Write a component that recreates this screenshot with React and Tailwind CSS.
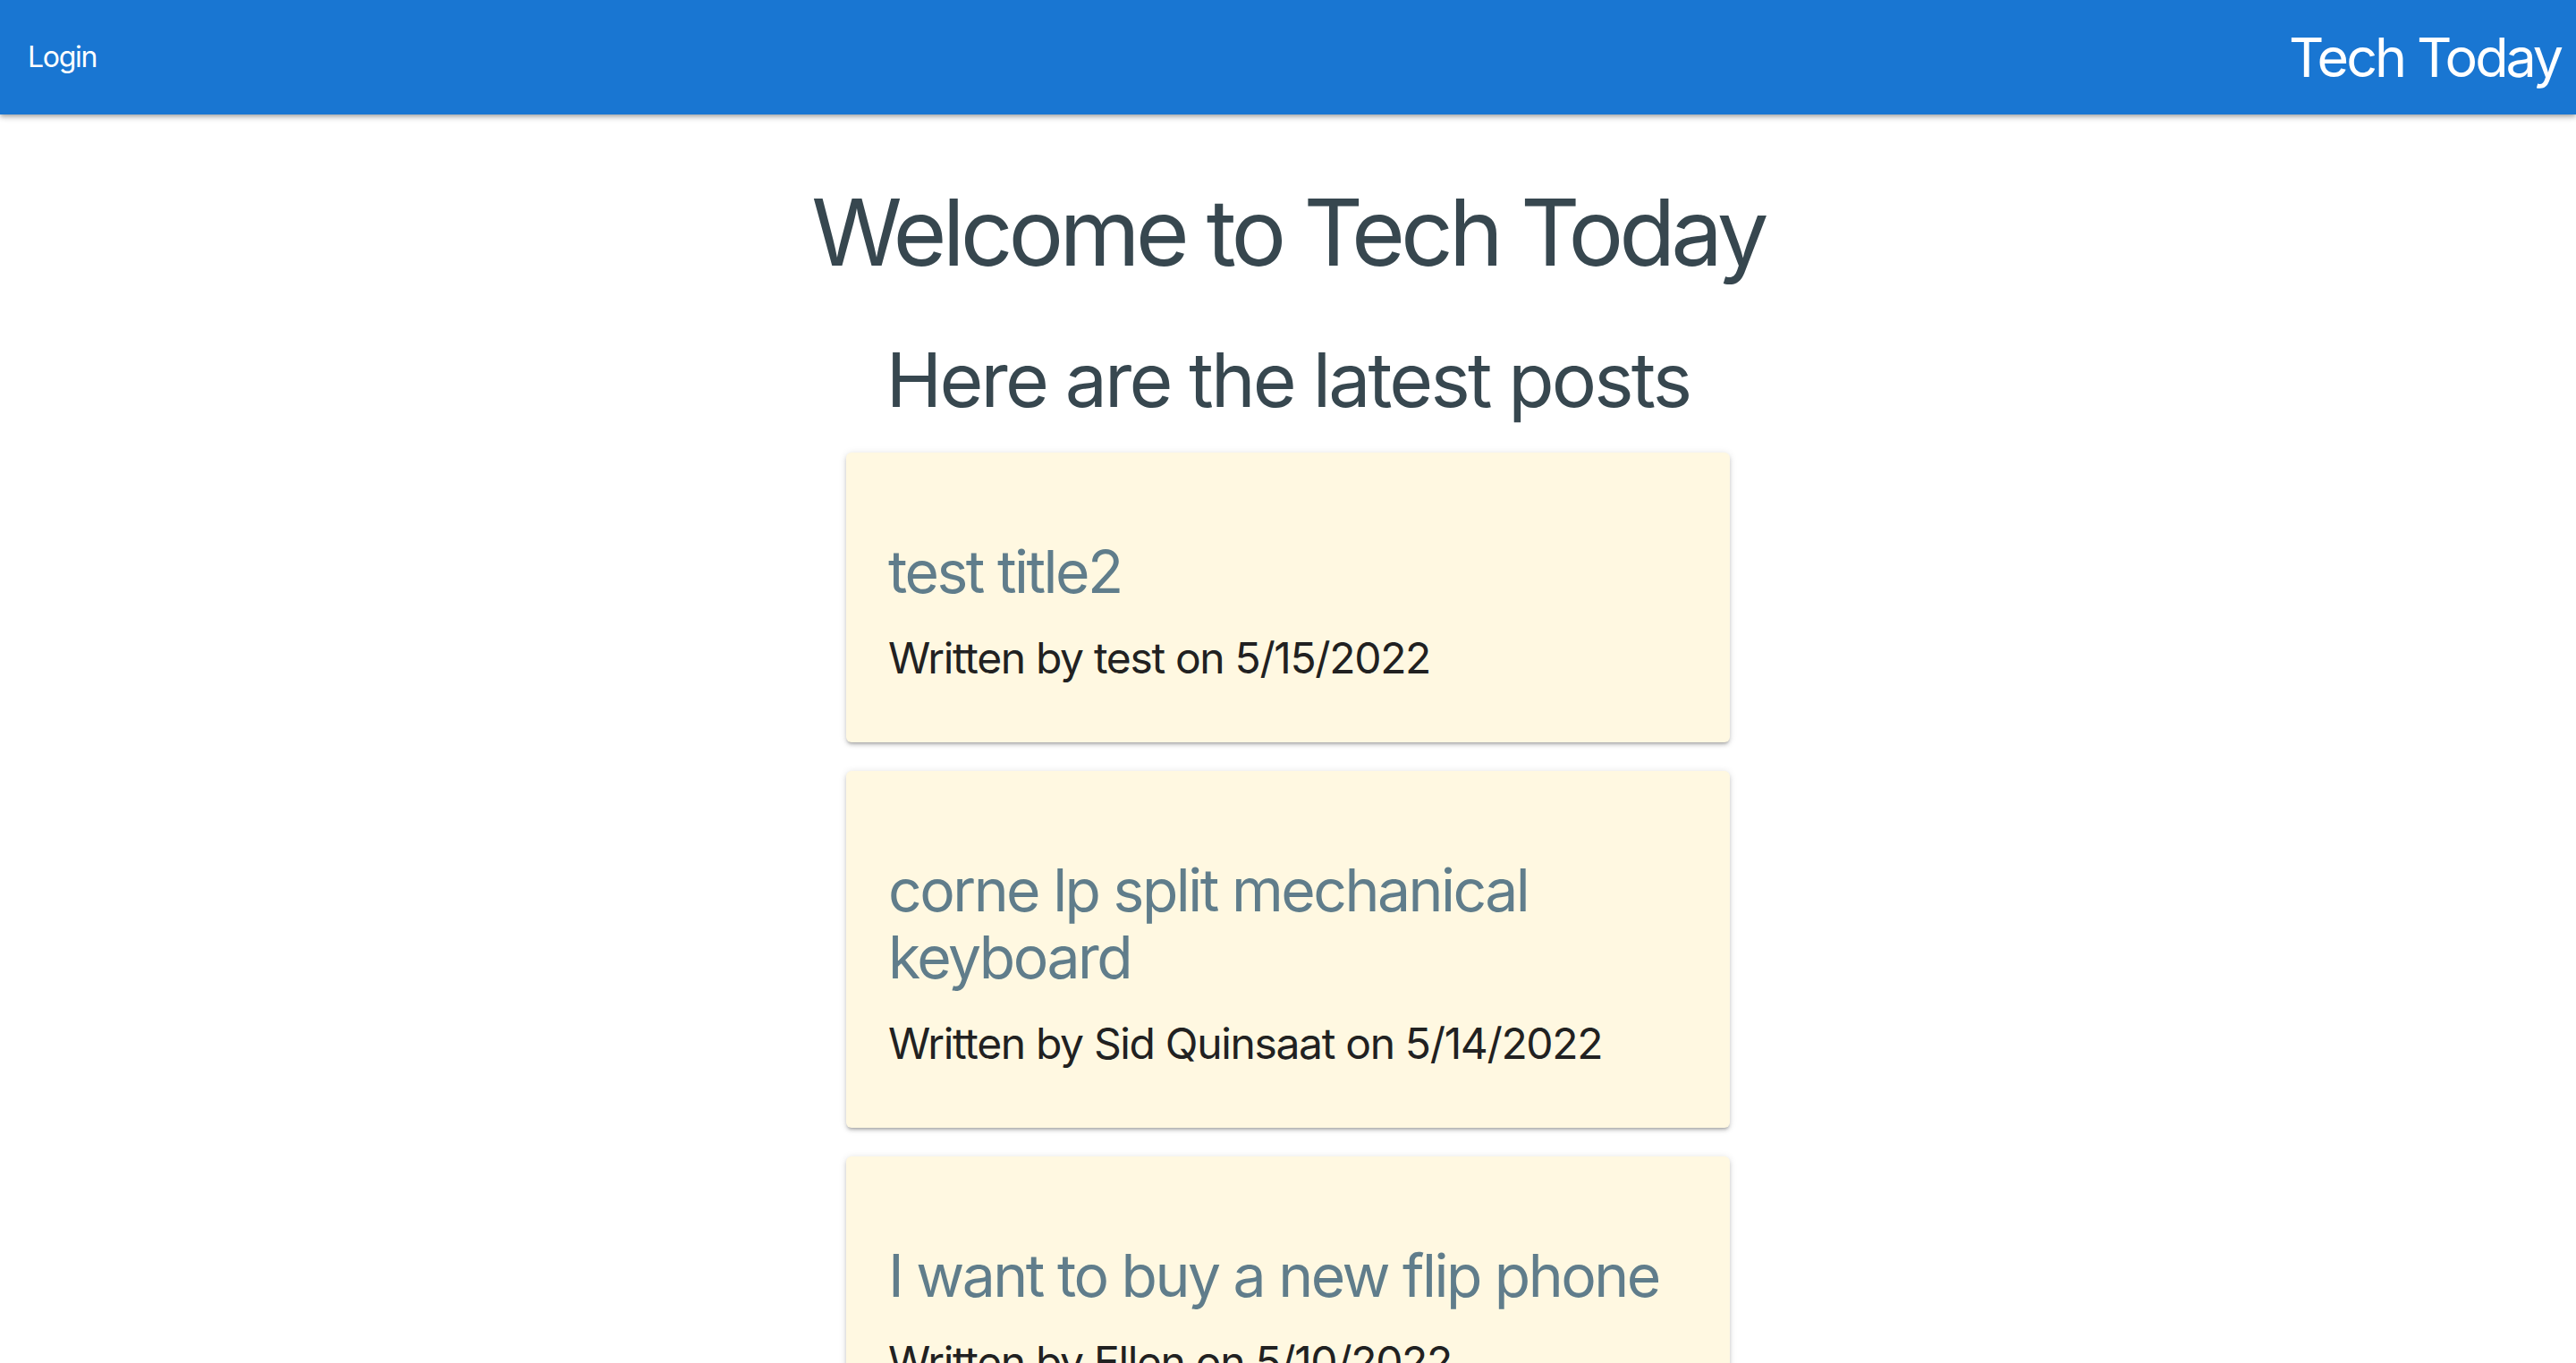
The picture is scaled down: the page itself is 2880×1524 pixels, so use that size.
import React from 'react';

const posts = [
    { title: 'test title2', author: 'test', date: '5/15/2022' },
    { title: 'corne lp split mechanical keyboard', author: 'Sid Quinsaat', date: '5/14/2022' },
    { title: 'I want to buy a new flip phone', author: 'Ellen', date: '5/10/2022' },
];

const PostCard = ({ post }) => (
    <div className="bg-[#fff8e1] rounded-[6px] shadow-[0_3px_3px_-2px_rgba(0,0,0,0.2),0_3px_4px_0_rgba(0,0,0,0.14),0_1px_8px_0_rgba(0,0,0,0.12)] px-[47px] pt-[96px] pb-[58px]">
        <h3 className="text-[66px] leading-[75px] tracking-[-0.038em] text-[#607d8b]">{post.title}</h3>
        <p className="mt-[23px] text-[48px] leading-[72px] tracking-[-0.028em] text-[#212121]">
            Written by {post.author} on {post.date}
        </p>
    </div>
);

const App = () => {
    return (
        <div className="min-h-screen bg-white font-['Inter','Noto_Sans',sans-serif]">
            {/* Top bar */}
            <header className="h-[128px] bg-[#1976d2] flex items-center justify-between pl-[31px] pr-[17px] shadow-[0_2px_4px_-1px_rgba(0,0,0,0.2),0_4px_5px_0_rgba(0,0,0,0.14),0_1px_10px_0_rgba(0,0,0,0.12)]">
                <button className="text-white text-[32px] leading-none tracking-[-0.04em]">Login</button>
                <span className="text-white text-[61px] leading-none tracking-[-0.05em]">Tech Today</span>
            </header>

            <main className="flex flex-col items-center">
                <h1 className="mt-[70px] text-[103px] leading-[1.2] tracking-[-0.048em] text-[#37474f]">Welcome to Tech Today</h1>
                <h2 className="mt-[53px] text-[84px] leading-[1.2] tracking-[-0.034em] text-[#37474f]">Here are the latest posts</h2>

                <div className="mt-[31px] w-[988px] flex flex-col gap-[32px] pb-[60px]">
                    {posts.map((post) => (
                        <PostCard key={post.title} post={post} />
                    ))}
                </div>
            </main>
        </div>
    );
};

export default App;
